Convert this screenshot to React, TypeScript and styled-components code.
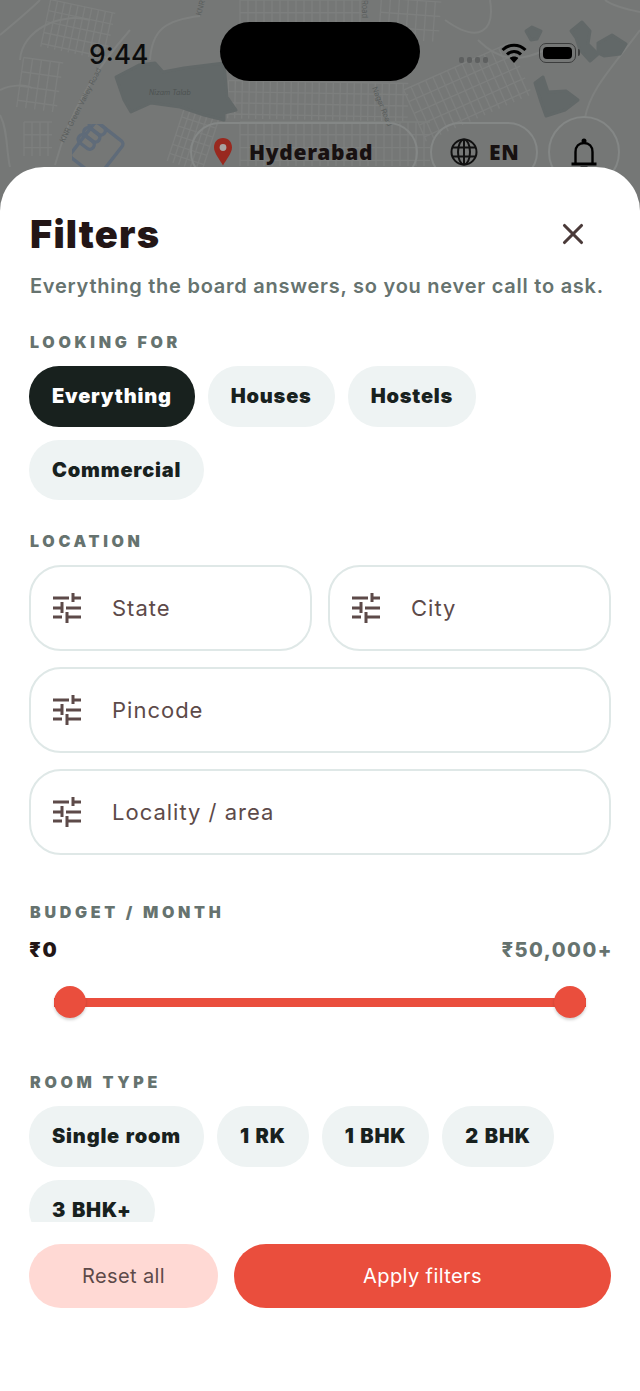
import React from "react";
import styled, { createGlobalStyle } from "styled-components";
import { X } from "lucide-react";

const GlobalStyle = createGlobalStyle`
  html, body { margin: 0; padding: 0; background: #fff; }
  * { box-sizing: border-box; }
  body { font-family: "Inter", "Liberation Sans", sans-serif; }
`;

const Page = styled.div`
  position: relative;
  width: 640px;
  height: 1391px;
  overflow: hidden;
  background: #757776;
`;

const MapLayer = styled.svg`
  position: absolute;
  inset: 0;
`;

const StatusBar = styled.div`
  position: relative;
  height: 116px;
  display: grid;
  grid-template-columns: 220px 200px 220px;
  padding-top: 22px;
`;

const Time = styled.div`
  padding: 15px 0 0 89px;
  font-size: 26.5px;
  line-height: 34px;
  font-weight: 500;
  color: #0c0c0c;
`;

const Island = styled.div`
  height: 59px;
  border-radius: 30px;
  background: #000;
`;

const StatusIcons = styled.div`
  display: flex;
  align-items: flex-start;
  padding: 21px 0 0 39px;
`;

const SignalDots = styled.div`
  display: flex;
  gap: 3px;
  margin: 14px 13px 0 0;
`;

const SignalDot = styled.span`
  width: 5px;
  height: 6px;
  border-radius: 2px;
  background: #5e6060;
`;

const Battery = styled.div`
  position: relative;
  width: 37px;
  height: 20px;
  margin-left: 12px;
  padding: 3px;
  border: 1.5px solid #3c3d3d;
  border-radius: 7px;

  &::after {
    content: "";
    position: absolute;
    right: -5px;
    top: 5px;
    width: 2px;
    height: 7px;
    border-radius: 0 2px 2px 0;
    background: #3c3d3d;
  }
`;

const BatteryFill = styled.div`
  height: 100%;
  border-radius: 4px;
  background: #000;
`;

const TopBar = styled.div`
  position: relative;
  display: flex;
  align-items: flex-start;
  padding-left: 190px;
`;

const TopPill = styled.div<{ $width: number; $pad: number; $gap: number }>`
  width: ${(p) => p.$width}px;
  height: 60px;
  margin-top: 6px;
  margin-right: 12px;
  display: flex;
  align-items: center;
  gap: ${(p) => p.$gap}px;
  padding-left: ${(p) => p.$pad}px;
  border: 2px solid #848786;
  border-radius: 30px;
  font-family: "Noto Sans", "Inter", sans-serif;
  font-size: 21px;
  font-weight: 900;
  letter-spacing: 0.7px;
  color: #181111;
`;

const BellButton = styled.div`
  width: 72px;
  height: 72px;
  margin-left: -2px;
  display: flex;
  justify-content: center;
  padding-top: 20px;
  border: 2px solid #848786;
  border-radius: 50%;
`;

const Logo = styled.svg`
  position: absolute;
  left: 72px;
  top: 124px;
`;

const Sheet = styled.div`
  position: absolute;
  left: 0;
  right: 0;
  top: 167px;
  bottom: 0;
  display: flex;
  flex-direction: column;
  padding: 0 29px;
  background: #fff;
  border-radius: 44px 44px 0 0;
`;

const SheetHeader = styled.div`
  display: flex;
  align-items: center;
  justify-content: space-between;
  height: 46px;
  margin-top: 44px;
`;

const Title = styled.h1`
  margin: 0 0 0 1px;
  font-size: 38px;
  line-height: 46px;
  font-weight: 900;
  letter-spacing: 1.2px;
  color: #231616;
`;

const CloseButton = styled.div`
  display: flex;
  margin-right: 21px;
  color: #4a3a39;
`;

const Subtitle = styled.p`
  margin: 15px 0 0 1px;
  font-size: 20px;
  line-height: 28px;
  font-weight: 600;
  letter-spacing: 0.75px;
  white-space: nowrap;
  color: #66736f;
`;

const ScrollArea = styled.div`
  flex: 1;
  min-height: 0;
  margin: 0 -6px;
  padding: 0 6px;
  overflow: hidden;
`;

const SectionLabel = styled.div<{ $top: number }>`
  margin: ${(p) => p.$top}px 0 13px 1px;
  font-size: 16px;
  line-height: 22px;
  font-weight: 900;
  letter-spacing: 3.7px;
  color: #66736f;
`;

const ChipRow = styled.div`
  display: flex;
  flex-wrap: wrap;
  gap: 13px;
`;

const Chip = styled.div<{ $active?: boolean }>`
  height: 60.5px;
  display: flex;
  align-items: center;
  padding: 0 23px;
  border-radius: 30px;
  font-size: 20px;
  font-weight: 900;
  letter-spacing: 0.8px;
  word-spacing: 1px;
  color: ${(p) => (p.$active ? "#fff" : "#18211e")};
  background: ${(p) => (p.$active ? "#18211e" : "#eef3f3")};
`;

const FieldGrid = styled.div`
  display: grid;
  grid-template-columns: 1fr 1fr;
  gap: 16px;
`;

const Field = styled.div<{ $wide?: boolean }>`
  grid-column: ${(p) => (p.$wide ? "1 / -1" : "auto")};
  height: 86px;
  display: flex;
  align-items: center;
  gap: 30px;
  padding-left: 21px;
  border: 2px solid #dfe8e7;
  border-radius: 32px;
  font-size: 22px;
  letter-spacing: 1px;
  color: #5d4a49;
`;

const BudgetRow = styled.div`
  display: flex;
  justify-content: space-between;
  font-size: 20px;
  line-height: 28px;
  font-weight: 800;
  letter-spacing: 1.5px;
`;

const BudgetMin = styled.span`
  color: #231616;
  font-weight: 900;
`;

const BudgetMax = styled.span`
  margin-right: -2px;
  color: #66736f;
`;

const SliderWrap = styled.div`
  position: relative;
  height: 32px;
  margin: 22px 25px 0;
  display: flex;
  align-items: center;
`;

const SliderTrack = styled.div`
  flex: 1;
  height: 9px;
  background: #ea4e3d;
`;

const SliderThumb = styled.div<{ $side: "left" | "right" }>`
  position: absolute;
  top: 0;
  ${(p) => p.$side}: 0;
  width: 32px;
  height: 32px;
  border-radius: 50%;
  background: #ea4e3d;
  box-shadow: 0 2px 3px rgba(0, 0, 0, 0.18);
`;

const Footer = styled.div`
  display: flex;
  gap: 16px;
  margin-top: 22px;
  margin-bottom: 83px;
`;

const FooterButton = styled.div<{ $primary?: boolean }>`
  flex: ${(p) => (p.$primary ? "1" : "0 0 189px")};
  height: 64px;
  display: flex;
  align-items: center;
  justify-content: center;
  border-radius: 32px;
  font-size: 20px;
  letter-spacing: 0.4px;
  color: ${(p) => (p.$primary ? "#fff" : "#5d4a49")};
  background: ${(p) => (p.$primary ? "#ea4e3d" : "#ffd9d4")};
`;

// street blocks of the map, each group is a rotated grid
const grids = [
  { x: 45, y: 6, w: 66, h: 48, r: 12, s: 7 },
  { x: 20, y: 60, w: 40, h: 50, r: 8, s: 9 },
  { x: 240, y: 0, w: 125, h: 60, r: 0, s: 8 },
  { x: 228, y: 82, w: 180, h: 38, r: 1, s: 7 },
  { x: 380, y: 0, w: 60, h: 40, r: 4, s: 9 },
  { x: 410, y: 64, w: 116, h: 56, r: -24, s: 8 },
  { x: 175, y: 112, w: 36, h: 56, r: 18, s: 6 },
  { x: 24, y: 122, w: 28, h: 34, r: 0, s: 8 },
  { x: 240, y: 122, w: 190, h: 44, r: 0, s: 8 },
];

function MapBackground() {
  return (
    <MapLayer width={640} height={200} viewBox="0 0 640 200">
      <g stroke="#7d7f7e" strokeWidth={1.4} fill="none">
        {grids.map((g, i) => {
          const lines = [];
          for (let x = 0; x <= g.w; x += g.s) {
            lines.push(<line key={`v${x}`} x1={g.x + x} y1={g.y} x2={g.x + x} y2={g.y + g.h} />);
          }
          for (let y = 0; y <= g.h; y += g.s * 1.6) {
            lines.push(<line key={`h${y}`} x1={g.x} y1={g.y + y} x2={g.x + g.w} y2={g.y + y} />);
          }
          return (
            <g key={i} transform={`rotate(${g.r} ${g.x + g.w / 2} ${g.y + g.h / 2})`}>
              {lines}
            </g>
          );
        })}
      </g>
      <g stroke="#7e807f" strokeWidth={2} fill="none">
        <path d="M0 35 C12 25 30 10 40 0" />
        <path d="M20 60 C22 30 60 12 90 20" />
        <path d="M150 60 C152 30 165 20 200 16" />
        <path d="M55 165 C70 110 95 70 130 30" />
        <path d="M0 90 C10 85 25 84 32 88" />
        <path d="M0 115 C8 130 6 150 10 167" />
        <path d="M640 12 C620 8 610 4 605 0" />
        <path d="M585 118 C590 90 610 70 640 30" />
        <path d="M478 40 C500 62 520 62 545 50" />
        <path d="M445 20 C480 45 495 30 490 0" />
      </g>
      <g fill="#626868" stroke="#626868" strokeWidth={3} strokeLinejoin="round">
        <path d="M116 77 L139 65 L155 63 L163 72 L184 68 L224 63 L227 97 L236 110 L224 113 L224 120 L204 115 L180 107 L151 103 L131 112 L124 100 Z" />
        <path d="M526 31 L532 27 L541 31 L537 39 L531 40 Z" />
        <path d="M571 31 L582 22 L590 31 L588 44 L598 54 L590 61 L580 50 L576 38 Z" />
        <path d="M598 43 L612 35 L626 44 L620 54 L604 56 L598 53 Z" />
        <path d="M535 83 L543 77 L548 92 L566 91 L578 100 L565 110 L546 116 L541 102 Z" />
      </g>
      <text x="149" y="95" fontSize={7} fontStyle="italic" fontFamily="Inter, sans-serif" fill="#4d5251">
        Nizam Talab
      </text>
      <g fontFamily="Inter, sans-serif" fontSize={7.5} fill="#5a5e5d">
        <text transform="translate(64 143) rotate(-63)">KNR Green Valley Road</text>
        <text transform="translate(201 16) rotate(-75)">KNR</text>
        <text transform="translate(362 0) rotate(90)">Road</text>
        <text transform="translate(372 88) rotate(68)">Nagar Road</text>
      </g>
    </MapLayer>
  );
}

function WifiIcon() {
  return (
    <svg width={26} height={20} viewBox="0 0 26 20" fill="none" stroke="#000" strokeWidth={3}>
      <path d="M1.5 7 C8 0.5 18 0.5 24.5 7" />
      <path d="M6 11.5 C10 7.5 16 7.5 20 11.5" />
      <path d="M13 20 L8.6 15 C11 13 15 13 17.4 15 Z" fill="#000" stroke="none" />
    </svg>
  );
}

function PinIcon() {
  return (
    <svg width={20} height={28} viewBox="0 0 20 28">
      <path d="M10 0 C4.5 0 1 4 1 9.5 C1 15 7 22 10 27.5 C13 22 19 15 19 9.5 C19 4 15.5 0 10 0 Z" fill="#99291f" />
      <circle cx={10} cy={9.5} r={3.4} fill="#a8a3a1" />
    </svg>
  );
}

function GlobeIcon() {
  return (
    <svg width={28} height={28} viewBox="0 0 28 28" fill="none" stroke="#111" strokeWidth={2}>
      <circle cx={14} cy={14} r={12.5} />
      <ellipse cx={14} cy={14} rx={6} ry={12.5} />
      <path d="M14 1.5 V26.5 M2 9.5 H26 M2 18.5 H26" />
    </svg>
  );
}

function BellIcon() {
  return (
    <svg width={26} height={32} viewBox="0 0 26 32" fill="none" stroke="#000" strokeWidth={2.4}>
      <circle cx={13} cy={3} r={2.5} fill="#000" stroke="none" />
      <path d="M4.5 25 V14 C4.5 8.5 8 5 13 5 C18 5 21.5 8.5 21.5 14 V25" />
      <path d="M0.5 26 H25.5" strokeWidth={3} />
      <path d="M9.5 30 H16.5" strokeWidth={3} />
    </svg>
  );
}

function TuneIcon() {
  return (
    <svg width={30} height={30} viewBox="-1 0 30 30" fill="none" stroke="#5d4a49" strokeWidth={3}>
      <path d="M0 5 H16 M20 5 H28 M20 0 V9" />
      <path d="M0 15 H8 M13 15 H28 M9 9 V20" />
      <path d="M0 24 H9 M14 24 H28 M14 19 V30" />
    </svg>
  );
}

const FILTER_FIELDS = [
  { label: "State" },
  { label: "City" },
  { label: "Pincode", wide: true },
  { label: "Locality / area", wide: true },
];

export default function App() {
  return (
    <Page>
      <GlobalStyle />
      <MapBackground />
      <StatusBar>
        <Time>9:44</Time>
        <Island />
        <StatusIcons>
          <SignalDots>
            <SignalDot />
            <SignalDot />
            <SignalDot />
            <SignalDot />
          </SignalDots>
          <WifiIcon />
          <Battery>
            <BatteryFill />
          </Battery>
        </StatusIcons>
      </StatusBar>
      <Logo width={54} height={48} viewBox="0 0 54 48" fill="none" stroke="#5f6b79" strokeWidth={3.4}>
        <g transform="rotate(38 26 24)" strokeLinejoin="round">
          <rect x={8} y={4} width={36} height={44} rx={4} />
          <rect x={4} y={4} width={18} height={9} rx={4.5} />
          <rect x={4} y={13} width={18} height={9} rx={4.5} />
          <rect x={4} y={22} width={18} height={9} rx={4.5} />
        </g>
      </Logo>
      <TopBar>
        <TopPill $width={228} $pad={21} $gap={16}>
          <PinIcon />
          Hyderabad
        </TopPill>
        <TopPill $width={108} $pad={18} $gap={11}>
          <GlobeIcon />
          EN
        </TopPill>
        <BellButton>
          <BellIcon />
        </BellButton>
      </TopBar>

      <Sheet>
        <SheetHeader>
          <Title>Filters</Title>
          <CloseButton>
            <X size={34} strokeWidth={2.2} />
          </CloseButton>
        </SheetHeader>
        <Subtitle>Everything the board answers, so you never call to ask.</Subtitle>

        <ScrollArea>
          <SectionLabel $top={31}>LOOKING FOR</SectionLabel>
          <ChipRow>
            <Chip $active>Everything</Chip>
            <Chip>Houses</Chip>
            <Chip>Hostels</Chip>
            <Chip>Commercial</Chip>
          </ChipRow>

          <SectionLabel $top={30}>LOCATION</SectionLabel>
          <FieldGrid>
            {FILTER_FIELDS.map((f) => (
              <Field key={f.label} $wide={f.wide}>
                <TuneIcon />
                {f.label}
              </Field>
            ))}
          </FieldGrid>

          <SectionLabel $top={46}>BUDGET / MONTH</SectionLabel>
          <BudgetRow>
            <BudgetMin>₹0</BudgetMin>
            <BudgetMax>₹50,000+</BudgetMax>
          </BudgetRow>
          <SliderWrap>
            <SliderTrack />
            <SliderThumb $side="left" />
            <SliderThumb $side="right" />
          </SliderWrap>

          <SectionLabel $top={53}>ROOM TYPE</SectionLabel>
          <ChipRow>
            <Chip>Single room</Chip>
            <Chip>1 RK</Chip>
            <Chip>1 BHK</Chip>
            <Chip>2 BHK</Chip>
            <Chip>3 BHK+</Chip>
          </ChipRow>
        </ScrollArea>

        <Footer>
          <FooterButton>Reset all</FooterButton>
          <FooterButton $primary>Apply filters</FooterButton>
        </Footer>
      </Sheet>
    </Page>
  );
}
